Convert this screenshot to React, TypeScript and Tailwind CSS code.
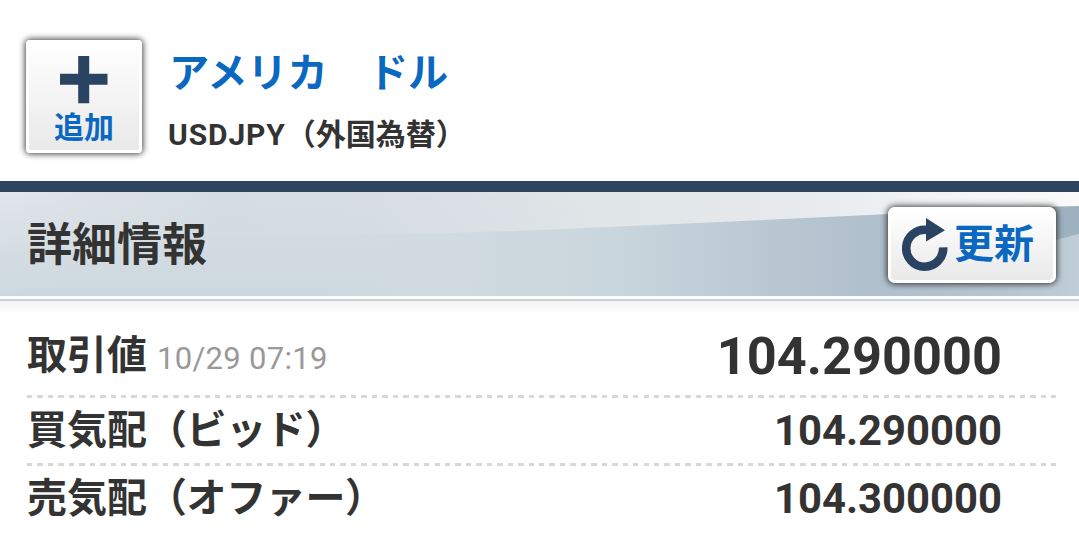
import { ReactNode } from "react";

interface Quote {
	label: string;
	note?: string;
	time?: string;
	value: string;
}

const Quotes: Quote[] = [
	{ label: "取引値", time: "10/29 07:19", value: "104.290000" },
	{ label: "買気配", note: "（ビッド）", value: "104.290000" },
	{ label: "売気配", note: "（オファー）", value: "104.300000" },
];

function GlossyButton({
	className,
	children,
}: {
	className: string;
	children: ReactNode;
}) {
	return (
		<button
			className={`flex shrink-0 border-3 border-white bg-linear-to-b from-white to-[#e9e9e9] font-bold text-[#0a68c1] shadow-[0_0_6px_1px_rgba(0,0,0,0.75)] ${className}`}
		>
			{children}
		</button>
	);
}

function PlusIcon() {
	return (
		<svg
			className="shrink-0"
			width="48"
			height="48"
			viewBox="0 0 48 48"
			fill="#2a4362"
		>
			<path d="M18.2 0h11v17.8H47.5v11H29.2v18.5h-11V28.8H0v-11h18.2z" />
		</svg>
	);
}

function RefreshIcon() {
	return (
		<svg
			className="shrink-0"
			width="46"
			height="54"
			viewBox="0 0 46 54"
		>
			<path
				d="M41.2 29.4A18.5 18.5 0 1 1 25 11.9"
				fill="none"
				stroke="#2a4362"
				strokeWidth="8.6"
			/>
			<path d="M24 0L43 12.2L24 23.6z" fill="#2a4362" />
		</svg>
	);
}

// Pale waves behind the section title
function HeadingBackground() {
	return (
		<svg
			className="absolute inset-0 h-full w-full"
			viewBox="0 0 1079 104"
			preserveAspectRatio="none"
		>
			<defs>
				<linearGradient id="sky">
					<stop offset="0" stopColor="#e1e7eb" />
					<stop offset="0.2" stopColor="#d6dee3" />
					<stop offset="0.35" stopColor="#d8dee5" />
					<stop offset="0.5" stopColor="#dfe4e7" />
					<stop offset="0.72" stopColor="#e5e9ec" />
					<stop offset="0.85" stopColor="#f0f2f4" />
					<stop offset="1" stopColor="#fafafa" />
				</linearGradient>
				<linearGradient
					id="wave"
					gradientUnits="userSpaceOnUse"
					x1="300"
					y1="0"
					x2="1079"
					y2="0"
				>
					<stop offset="0" stopColor="#ced9df" stopOpacity="0" />
					<stop offset="0.26" stopColor="#ced9df" />
					<stop offset="0.4" stopColor="#cad6dd" />
					<stop offset="0.54" stopColor="#bfccd6" />
					<stop offset="0.63" stopColor="#b8c6d1" />
					<stop offset="0.74" stopColor="#afbfcc" />
					<stop offset="0.9" stopColor="#b6c4cf" />
					<stop offset="1" stopColor="#c1cdd7" />
				</linearGradient>
				<linearGradient id="fade" x1="0" y1="0" x2="0" y2="1">
					<stop offset="0" stopColor="#d3dbe1" stopOpacity="0" />
					<stop offset="0.65" stopColor="#cfd9df" stopOpacity="0.8" />
					<stop offset="1" stopColor="#ccd8df" />
				</linearGradient>
				<linearGradient id="fadeOut">
					<stop offset="0.55" stopColor="white" />
					<stop offset="1" stopColor="black" />
				</linearGradient>
				<mask id="fadeMask">
					<rect width="600" height="104" fill="url(#fadeOut)" />
				</mask>
			</defs>
			<rect width="1079" height="104" fill="url(#sky)" />
			<rect
				width="600"
				height="104"
				fill="url(#fade)"
				mask="url(#fadeMask)"
			/>
			<path
				d="M300 43C400 43 460 41 540 38L720 30L890 22L1079 15V104H300z"
				fill="url(#wave)"
			/>
			<path d="M1000 16L1079 14V42C1060 47 1040 52 1000 56z" fill="#9fb2bf" />
		</svg>
	);
}

function QuoteRow({ label, note, time, value }: Quote) {
	return (
		<div
			className={`flex items-center justify-between pr-[54px] ${
				time ? "h-[69px] pb-[10px]" : "h-[65px]"
			}`}
		>
			<div className="flex items-baseline gap-[10px]">
				<span className="text-[40px] leading-[60px] font-bold">
					{label}
					{note && <span className="tracking-[-0.4px]">{note}</span>}
				</span>
				{time && (
					<span className="text-[31px] tracking-[0.3px] text-[#999]">
						{time}
					</span>
				)}
			</div>
			<span
				className={`font-bold ${
					time
						? "text-[52.3px] leading-[60px]"
						: "text-[41.8px] leading-[60px]"
				}`}
			>
				{value}
			</span>
		</div>
	);
}

function Divider() {
	return (
		<div className="h-[3px] bg-[repeating-linear-gradient(90deg,#d8d8d8_0,#d8d8d8_5.4px,transparent_5.4px,transparent_10.45px)]" />
	);
}

export default function App() {
	return (
		<div className="h-[560px] w-[1079px] overflow-hidden bg-white font-[Roboto,'Noto_Sans_CJK_JP',sans-serif] text-[#333]">
			<header className="flex h-[181px] gap-[26px] pt-10 pl-[26px]">
				<GlossyButton className="h-[113px] w-[116px] flex-col items-center rounded-[4px] pt-[13px]">
					<PlusIcon />
					<span className="text-[30px] leading-[48px]">追加</span>
				</GlossyButton>
				<div className="flex flex-col">
					<h1 className="pl-px text-[40.2px] leading-[68px] font-bold text-[#0a68c1]">
						アメリカ　ドル
					</h1>
					<p className="text-[30px] leading-[54px] font-bold">
						<span className="tracking-[0.9px]">USDJPY</span>（外国為替）
					</p>
				</div>
			</header>

			<section className="relative flex h-[115px] items-center justify-between border-t-11 border-[#2e4560] pr-[23px] pl-[27px]">
				<HeadingBackground />
				<h2 className="relative pt-[4px] text-[45px] leading-[60px] font-bold">
					詳細情報
				</h2>
				<GlossyButton className="relative mt-[2px] h-[76px] w-[168px] items-center gap-[6px] rounded-[7px] pl-[11px]">
					<RefreshIcon />
					<span className="text-[40px] leading-[60px]">更新</span>
				</GlossyButton>
			</section>
			<div className="h-[5px] border-b-2 border-[#c9d0d5] bg-[#fcfdfd]" />

			<main className="bg-linear-to-b from-[#f5f5f5] to-white to-[14px] pt-[25px] pr-[23px] pl-[27px]">
				{Quotes.map((quote, index) => (
					<div key={quote.label}>
						{index > 0 && <Divider />}
						<QuoteRow {...quote} />
					</div>
				))}
			</main>
		</div>
	);
}
